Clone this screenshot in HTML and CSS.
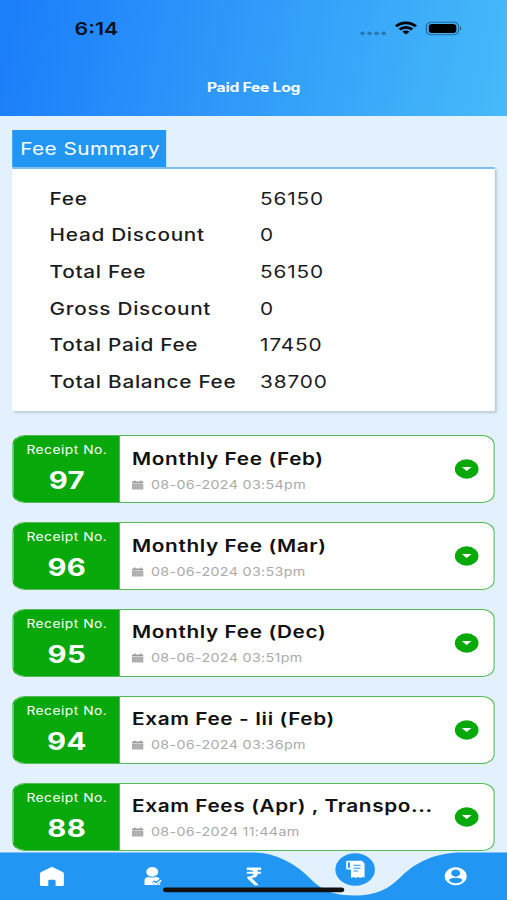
FILE: index.html
```html
<!DOCTYPE html>
<html lang="en">
<head>
<meta charset="utf-8">
<meta name="viewport" content="width=device-width">
<title>Paid Fee Log</title>
<link rel="stylesheet" href="styles.css">
</head>
<body>
<svg width="0" height="0" class="defs" aria-hidden="true">
  <symbol id="calendar" viewBox="0 0 10 10"><path fill="#999" d="M0 2.8V2q0-.8.8-.8h1V.2H3v1h4v-1h1.200v1h1q.8 0 .8.8v.8z"/><path fill="#aaa" d="M0 3.300h10v5.500q0 1-1 1H1q-1 0-1-1z"/><path stroke="#ccc" stroke-width=".5" stroke-dasharray="1.2 .7" d="M1.500 5.200h7M1.500 6.800h7M1.500 8.300h7"/></symbol>
  <symbol id="toggle" viewBox="0 0 20 20"><circle cx="10" cy="10" r="9.7" fill="#06a80a"/><path fill="#fff" d="M6 8h8l-4 4z"/></symbol>
</svg>
<div class="app">
  <header class="header">
    <div class="status">
      <span class="time">6:14</span>
      <svg class="signals" width="80" height="20" viewBox="0 0 80 20">
        <g fill="#000" opacity=".28"><circle cx="1.800" cy="14.300" r="1.900"/><circle cx="7.500" cy="14.300" r="1.900"/><circle cx="13.300" cy="14.300" r="1.900"/><circle cx="19.100" cy="14.300" r="1.900"/></g>
        <g fill="none" stroke="#000" stroke-width="2.600"><path d="M29.200 7.300a11.300 11.300 0 0 1 16.200 0M32.200 10.500a7.100 7.100 0 0 1 10.200 0"/></g>
        <path d="M34.400 12.700a4 4 0 0 1 5.800 0l-2.900 2.900z"/>
        <rect x="54" y="3.300" width="26.300" height="12.400" rx="4" fill="none" stroke="#000" stroke-opacity=".4"/>
        <rect x="56" y="5" width="22.500" height="9" rx="2.800"/>
        <path d="M81.600 7.600q1.800 1.900 0 4z" opacity=".6"/>
      </svg>
    </div>
    <h1 class="title">Paid Fee Log</h1>
  </header>
  <main class="content">
    <h2 class="tab">Fee Summary</h2>
    <dl class="summary">
      <dt>Fee</dt><dd>56150</dd>
      <dt>Head Discount</dt><dd>0</dd>
      <dt>Total Fee</dt><dd>56150</dd>
      <dt>Gross Discount</dt><dd>0</dd>
      <dt>Total Paid Fee</dt><dd>17450</dd>
      <dt>Total Balance Fee</dt><dd>38700</dd>
    </dl>
    <section class="list">
      <article class="card">
        <div class="receipt"><span class="label">Receipt No.</span><strong class="number">97</strong></div>
        <div class="info"><h3 class="name">Monthly Fee (Feb)</h3><p class="date"><svg class="cal"><use href="#calendar"/></svg><span>08-06-2024 03:54pm</span></p></div>
        <svg class="toggle"><use href="#toggle"/></svg>
      </article>
      <article class="card">
        <div class="receipt"><span class="label">Receipt No.</span><strong class="number">96</strong></div>
        <div class="info"><h3 class="name">Monthly Fee (Mar)</h3><p class="date"><svg class="cal"><use href="#calendar"/></svg><span>08-06-2024 03:53pm</span></p></div>
        <svg class="toggle"><use href="#toggle"/></svg>
      </article>
      <article class="card">
        <div class="receipt"><span class="label">Receipt No.</span><strong class="number">95</strong></div>
        <div class="info"><h3 class="name">Monthly Fee (Dec)</h3><p class="date"><svg class="cal"><use href="#calendar"/></svg><span>08-06-2024 03:51pm</span></p></div>
        <svg class="toggle"><use href="#toggle"/></svg>
      </article>
      <article class="card">
        <div class="receipt"><span class="label">Receipt No.</span><strong class="number">94</strong></div>
        <div class="info"><h3 class="name">Exam Fee - Iii (Feb)</h3><p class="date"><svg class="cal"><use href="#calendar"/></svg><span>08-06-2024 03:36pm</span></p></div>
        <svg class="toggle"><use href="#toggle"/></svg>
      </article>
      <article class="card">
        <div class="receipt"><span class="label">Receipt No.</span><strong class="number">88</strong></div>
        <div class="info"><h3 class="name">Exam Fees (Apr) , Transpo...</h3><p class="date"><svg class="cal"><use href="#calendar"/></svg><span>08-06-2024 11:44am</span></p></div>
        <svg class="toggle"><use href="#toggle"/></svg>
      </article>
    </section>
  </main>
  <nav class="nav">
    <svg width="415" height="49" viewBox="0 0 415 49">
      <path fill="#2196f3" d="M0 .5H207C225 .5 242 11 256 29C266 41 277 43.5 291 43.5C308 43.5 318 37 328 25C340 10 357 .5 378 .5H415V49H0z"/>
      <circle cx="290.700" cy="17.500" r="16.200" fill="#2196f3"/>
      <g fill="#fff">
        <path d="M42.500 14.700L51.300 20q1 .6 1 1.700v11.100q0 1.300-1.300 1.300h-5.500v-5.200q0-1.200-1.200-1.200h-3.600q-1.200 0-1.200 1.200v5.200h-5.500q-1.300 0-1.300-1.300V21.700q0-1.100 1-1.700z"/>
        <ellipse cx="124.600" cy="19.900" rx="4.900" ry="4.800"/>
        <path d="M118.300 33.100v-4.500q0-3.700 3.500-3.700 2.800 1.100 5.600 0 2.800 0 3.700 2.400v5.800z"/>
        <path d="M208.400 33.300L202.500 26.600v-2.100q4.500 0 5.100-2.800h-5.600v-2h5.500q-.6-1.700-3.700-1.700H202v-2.500h11.700v2.400h-3.200q.6.700.7 1.800h2.500v2h-2.500q-.5 3.800-5 4.400l5.600 7.200z"/>
        <path fill-rule="evenodd" d="M283.400 10q0-1.300 1.300-1.300h11q1.400 0 1.400 1.300l1.300 1.500v14.300l-1.500-.9-1.900 1.100-1.900-1.100-1.900 1.100-1.900-1.100-2 1V17.500h-2.800q-1.100 0-1.100-1.100zm1.400.3v5.800h1.600v-5.800z"/>
        <path fill-rule="evenodd" d="M373 15.200a9 9 0 1 0 .01 0zm0 2.400a3.600 3.600 0 1 1-.01 0zm0 13.600a6 6 0 0 1-5.600-3.300q1.400-2.100 5.600-2.100t5.600 2.100a6 6 0 0 1-5.600 3.300z"/>
      </g>
      <path fill="none" stroke="#2196f3" stroke-width="3" d="M125.300 29.300l2.500 2.500 4.600-4.400"/>
      <path fill="none" stroke="#fff" stroke-width="1.500" d="M125.200 30l2.500 2.500 4.200-4.100"/>
      <path fill="none" stroke="#2196f3" stroke-width="1" d="M289.300 13.300h5.800M289.300 16.200h5.800M289.300 19h3.800"/>
      <rect x="133.500" y="35.400" width="148.300" height="4.900" rx="2.450" fill="#111"/>
    </svg>
  </nav>
</div>
</body>
</html>
```
FILE: styles.css
```css
* { box-sizing: border-box; margin: 0; padding: 0; }
html, body { width: 100%; height: 900px; overflow: hidden; }
body { font-family: Inter, "Liberation Sans", sans-serif; background: #e3f1fe; }
.defs { position: absolute; }
svg { display: block; flex: none; }

.app {
  display: flex; flex-direction: column;
  width: 415px; height: 900px; overflow: hidden;
  background: #e3f1fe; color: #1c1c1e;
  transform: scaleX(1.22169); transform-origin: 0 0;
}
.header { flex: none; height: 115.500px; background: linear-gradient(100deg, #1a7dfa 0%, #46baf9 100%); }
.status { display: flex; justify-content: space-between; height: 58px; padding: 19px 35px 0 61px; }
.signals { overflow: visible; margin-right: 5px; }
.time { font-size: 17.500px; line-height: 20px; font-weight: 600; color: #06131f; }
.title { padding-top: 20px; font-size: 12.800px; line-height: 20px; font-weight: 750; letter-spacing: -.2px; text-align: center; color: #fff; }
.content { flex: 1; min-height: 0; padding: 14.500px 9.600px 0 10.300px; overflow: hidden; }
.tab {
  width: 126px; height: 36.500px; padding-left: 6.200px;
  background: #2196f3; color: #fff;
  font-size: 17px; line-height: 38.500px; font-weight: 400; letter-spacing: .38px; white-space: nowrap;
}
.summary {
  display: grid; grid-template-columns: 172.300px 1fr; grid-auto-rows: 36.650px; align-items: center;
  height: 244.500px; padding: 11.800px 0 0 30.300px;
  background: #fff; border-top: 2px solid #80bdeb;
  box-shadow: 1.500px 2px 2px #bccddc;
  font-size: 17px; letter-spacing: .7px; white-space: nowrap;
}
.summary dt { font-weight: 530; letter-spacing: .58px; }
.list { display: flex; flex-direction: column; gap: 18.850px; margin-top: 24.200px; }
.card {
  display: flex; align-items: center; height: 68px; overflow: hidden;
  border: 1.300px solid #54b957; border-left-color: #06a80a; border-radius: 10px; background: #fff;
}
.receipt {
  display: flex; flex-direction: column; align-items: center;
  width: 86.800px; height: 68px; flex: none; padding-top: 6px;
  background: #06a80a; color: #fff;
}
.label { font-size: 11.300px; line-height: 18px; letter-spacing: .4px; white-space: nowrap; }
.number { font-size: 24px; line-height: 30px; margin-top: 7px; font-weight: 700; letter-spacing: .3px; }
.info { flex: 1; padding: 2px 0 0 10px; }
.name { font-size: 17px; line-height: 24px; font-weight: 600; letter-spacing: .5px; color: #111; white-space: nowrap; }
.date { display: flex; align-items: center; gap: 6px; margin-top: 5px; font-size: 11.700px; line-height: 18px; letter-spacing: .28px; color: #aaa; white-space: nowrap; }
.cal { width: 9.500px; height: 10px; }
.toggle { width: 20px; height: 20px; margin-right: 12.300px; }
.nav { flex: none; height: 48.500px; }
```
